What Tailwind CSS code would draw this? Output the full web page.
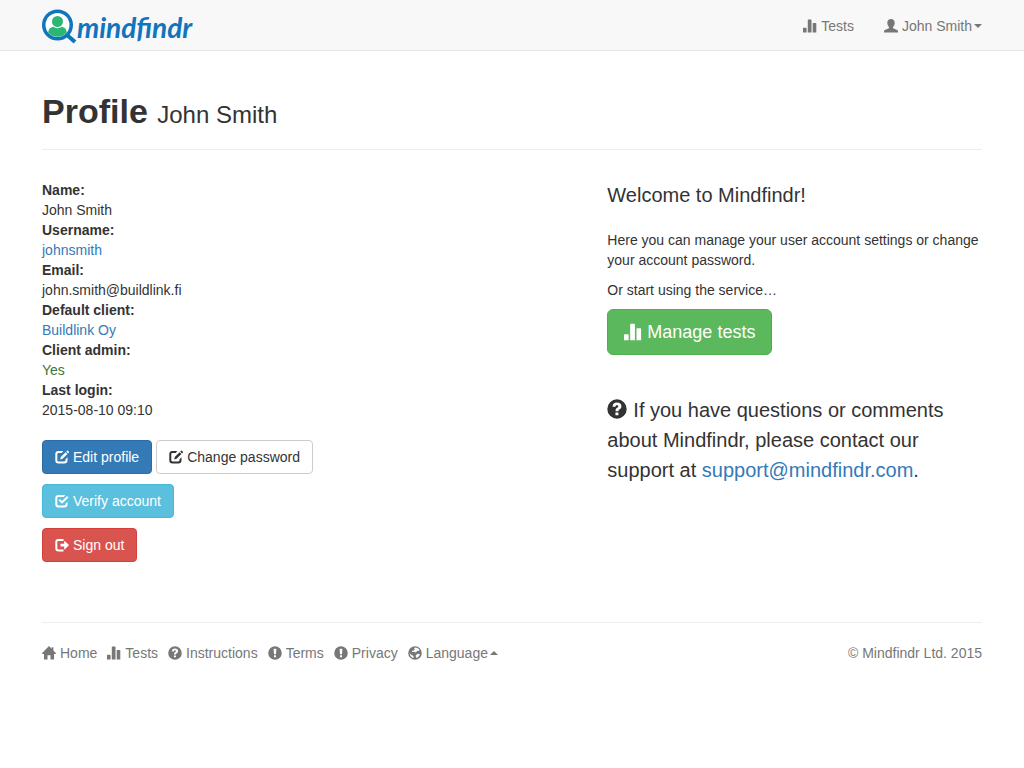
<!doctype html>
<html lang="en">
<head>
<meta charset="utf-8">
<meta name="viewport" content="width=device-width, initial-scale=1">
<title>Profile - Mindfindr</title>
<script src="https://cdn.jsdelivr.net/npm/@tailwindcss/browser@4"></script>
</head>
<body class="bg-white font-['Helvetica_Neue','Liberation_Sans',Arial,sans-serif] text-sm leading-5 text-[#333]">

<!-- Icons -->
<svg class="hidden">
  <symbol id="stats" viewBox="0 0 14 14">
    <path d="M0 9.400q0-.6.6-.6H3q.6 0 .6.6V13.500H0zM4.800 1.100Q4.800.5 5.400.5H7.900Q8.500.5 8.500 1.100V13.500H4.800zM9.700 4.600Q9.700 4 10.300 4H12.700Q13.300 4 13.300 4.600V13.500H9.700z"/>
  </symbol>
  <symbol id="user" viewBox="0 0 14 14">
    <path d="M7 0c2.300 0 3.700 1.500 3.700 3.700 0 1.700-.7 3.300-1.700 4.200v.9c0 .4.300.6.800.8l3.300 1.300c.7.3.9.8.9 1.500v1.100H0v-1.100c0-.7.200-1.200.9-1.500L4.200 9.600c.5-.2.8-.4.8-.8v-.9c-1-.9-1.700-2.500-1.700-4.200C3.300 1.500 4.700 0 7 0z"/>
  </symbol>
  <symbol id="edit" viewBox="0 0 14 14">
    <path d="M8.300 1H3.500A3.200 3.200 0 0 0 .3 4.200v6.100a3.200 3.200 0 0 0 3.200 3.200h5.800a3.200 3.200 0 0 0 3.200-3.200V7.200l-2 2v1.100c0 .7-.5 1.200-1.200 1.200H3.500c-.7 0-1.200-.5-1.200-1.200V4.200C2.300 3.500 2.800 3 3.500 3h3.200z"/>
    <path d="M5.200 9.600l.6-2.600 4.800-4.800 1.800 1.800-4.800 4.800zM11.200 1.600l.9-.9q.4-.4.8 0l1 1q.4.4 0 .8l-.9.900z"/>
  </symbol>
  <symbol id="check" viewBox="0 0 14 14">
    <path d="M10.300 1.300Q9.800 1 9.200 1H3.500A3.200 3.200 0 0 0 .3 4.200v6.100a3.200 3.200 0 0 0 3.200 3.200h5.800a3.200 3.200 0 0 0 3.200-3.200V7.800l-2 2v.5c0 .7-.5 1.200-1.200 1.200H3.500c-.7 0-1.200-.5-1.200-1.200V4.200C2.300 3.500 2.800 3 3.500 3h5.100z"/>
    <path d="M3.600 6.300L5 4.900l2 2 5-5 1.500 1.500L7 9.800z"/>
  </symbol>
  <symbol id="logout" viewBox="0 0 14 14">
    <path d="M8.500 1H3.500A3.200 3.200 0 0 0 .3 4.200v6.100a3.200 3.200 0 0 0 3.200 3.200h5v-2h-5c-.7 0-1.200-.5-1.200-1.200V4.200C2.300 3.500 2.800 3 3.500 3h5z"/>
    <path d="M5.500 5.800h3.700V3.200q0-.5.400-.2l4.100 3.800q.4.400 0 .8L9.600 11.400q-.4.300-.4-.2V8.600H5.500z"/>
  </symbol>
  <symbol id="question" viewBox="0 0 14 14">
    <path fill-rule="evenodd" d="M7 .2a6.800 6.800 0 1 1 0 13.600A6.800 6.800 0 0 1 7 .2zM3.900 5.500h2c0-.8.300-1.200 1-1.200.6 0 1 .3 1 .8 0 .4-.2.700-.8 1.100-.8.500-1.100 1-1.100 2v.3h2c0-.6.200-.8.900-1.300.8-.6 1.200-1.200 1.200-2.200 0-1.500-1.200-2.500-3.100-2.500-2 0-3.100 1.100-3.100 3zM5.900 9.400v1.900h2.100V9.400z"/>
  </symbol>
  <symbol id="alert" viewBox="0 0 14 14">
    <path fill-rule="evenodd" d="M7 .2a6.800 6.800 0 1 1 0 13.600A6.800 6.800 0 0 1 7 .2zM5.900 2.700q-.3 0-.3.400L6 8.200h2l.4-5.100q0-.4-.3-.4zM6 9.300v1.900h2V9.300z"/>
  </symbol>
  <symbol id="home" viewBox="0 0 14 14">
    <path d="M7 0l2.700 2.700V1.200h1.700v3.200L14 7.200l-.4.700h-1.600v5.300q0 .4-.4.400H8.500V9.200h-3v4.400H2.400q-.4 0-.4-.4V7.900H.4L0 7.200z"/>
  </symbol>
  <symbol id="globe" viewBox="0 0 14 14">
    <path fill-rule="evenodd" d="M7 .2a6.800 6.800 0 1 1 0 13.600A6.800 6.800 0 0 1 7 .2zM6.800 1.500l-.7 1 .8.8-1.300 1.200-1.200.2-.5 1.200 1.300.1.900-.5 1.100 1.100 1.300-.5.600-1.300 1.500.2 1-.9C10.800 2.600 9.200 1.500 6.800 1.500zM1.700 7.200c.1 2.300 1.600 4.200 3.700 4.900l.3-1.500-1-1.200-1.500-.6zM9.200 7.900l-1.500 1.500.2 1.600.9.900c1.500-.6 2.700-1.800 3.200-3.300l-1.300-.8z"/>
  </symbol>
</svg>

<nav class="border-b border-[#e7e7e7] bg-[#f8f8f8]">
  <div class="mx-auto flex h-[50px] max-w-[970px] items-center justify-between px-[15px]">
    <a href="#" class="flex items-center pt-1 text-[#0f75bc]">
      <svg class="h-9 w-[35px]" viewBox="0 0 35 36" aria-hidden="true">
        <path d="M25 26l8 7" stroke="#0f75bc" stroke-width="4"/>
        <circle cx="15.500" cy="16" r="15.500" fill="#0f75bc"/>
        <circle cx="15.500" cy="16" r="12" fill="#fff"/>
        <path d="M6.200 23.400C6.500 19.800 8.500 18.200 12 17.500l3.500 1.200 3.500-1.200c3.500.7 5.500 2.300 5.800 5.900a12 12 0 0 1-18.600 0z" fill="#2bb673"/>
        <circle cx="15.500" cy="12.500" r="5.500" fill="#2bb673"/>
        <path d="M11.500 17.600q4 2.600 8 0" fill="none" stroke="#fff"/>
      </svg>
      <span class="text-[28px] leading-9 font-bold italic font-['Lato',sans-serif]">mindfindr</span>
    </a>
    <div class="flex items-center gap-[30px] pt-0.5 text-[#777]">
      <a href="#" class="flex items-center gap-1"><svg class="size-3.5 fill-current"><use href="#stats"/></svg>Tests</a>
      <button class="flex items-center"><svg class="mr-1 size-3.5 fill-current"><use href="#user"/></svg>John Smith<span class="ml-0.5 border-x-4 border-t-4 border-x-transparent border-t-[#777]"></span></button>
    </div>
  </div>
</nav>

<div class="mx-auto max-w-[970px] px-[15px]">
  <header class="mt-10 mb-[30px] border-b border-[#eee] pb-[18px]">
    <h1 class="text-[34px] leading-10 font-bold">Profile <small class="text-2xl leading-none font-normal">John Smith</small></h1>
  </header>

  <main class="flex">
    <div class="w-7/12">
      <dl class="mb-5 [&_dt]:font-bold">
        <dt>Name:</dt>
        <dd>John Smith</dd>
        <dt>Username:</dt>
        <dd><a href="#" class="text-[#337ab7]">johnsmith</a></dd>
        <dt>Email:</dt>
        <dd>john.smith@buildlink.fi</dd>
        <dt>Default client:</dt>
        <dd><a href="#" class="text-[#337ab7]">Buildlink Oy</a></dd>
        <dt>Client admin:</dt>
        <dd class="text-[#3c763d]">Yes</dd>
        <dt>Last login:</dt>
        <dd>2015-08-10 09:10</dd>
      </dl>
      <div class="flex flex-col gap-2.5">
        <div class="flex gap-1">
          <a href="#" class="flex items-center gap-1 rounded border border-[#2e6da4] bg-[#337ab7] px-3 py-1.5 text-white"><svg class="size-3.5 fill-current"><use href="#edit"/></svg>Edit profile</a>
          <a href="#" class="flex items-center gap-1 rounded border border-[#ccc] bg-white px-3 py-1.5"><svg class="size-3.5 fill-current"><use href="#edit"/></svg>Change password</a>
        </div>
        <div class="flex">
          <button class="flex items-center gap-1 rounded border border-[#46b8da] bg-[#5bc0de] px-3 py-1.5 text-white"><svg class="size-3.5 fill-current"><use href="#check"/></svg>Verify account</button>
        </div>
        <div class="flex">
          <button class="flex items-center gap-1 rounded border border-[#d43f3a] bg-[#d9534f] px-3 py-1.5 text-white"><svg class="size-3.5 fill-current"><use href="#logout"/></svg>Sign out</button>
        </div>
      </div>
    </div>

    <div class="w-5/12 pl-[17px]">
      <p class="mb-5 text-xl leading-[30px]">Welcome to Mindfindr!</p>
      <p class="mb-2.5">Here you can manage your user account settings or change your account password.</p>
      <p class="mb-[9px]">Or start using the service…</p>
      <div class="mb-10 flex">
        <a href="#" class="flex items-center gap-[5px] rounded-md border border-[#4cae4c] bg-[#5cb85c] px-4 py-2 text-lg leading-7 text-white"><svg class="size-[18px] fill-current"><use href="#stats"/></svg>Manage tests</a>
      </div>
      <p class="text-xl leading-[30px]"><svg class="mr-1.5 mb-1.5 inline size-5 fill-current"><use href="#question"/></svg>If you have questions or comments about Mindfindr, please contact our support at <a href="#" class="text-[#337ab7]">support@mindfindr.com</a>.</p>
    </div>
  </main>

  <footer class="mt-[60px] flex justify-between border-t border-[#eee] pt-5 text-[#777]">
    <div class="flex gap-2.5">
      <a href="#" class="flex items-center gap-1"><svg class="size-3.5 fill-current"><use href="#home"/></svg>Home</a>
      <a href="#" class="flex items-center gap-1"><svg class="size-3.5 fill-current"><use href="#stats"/></svg>Tests</a>
      <a href="#" class="flex items-center gap-1"><svg class="size-3.5 fill-current"><use href="#question"/></svg>Instructions</a>
      <a href="#" class="flex items-center gap-1"><svg class="size-3.5 fill-current"><use href="#alert"/></svg>Terms</a>
      <a href="#" class="flex items-center gap-1"><svg class="size-3.5 fill-current"><use href="#alert"/></svg>Privacy</a>
      <button class="flex items-center"><svg class="mr-1 size-3.5 fill-current"><use href="#globe"/></svg>Language<span class="ml-0.5 border-x-4 border-b-4 border-x-transparent border-b-[#777]"></span></button>
    </div>
    <p>© Mindfindr Ltd. 2015</p>
  </footer>
</div>

</body>
</html>
